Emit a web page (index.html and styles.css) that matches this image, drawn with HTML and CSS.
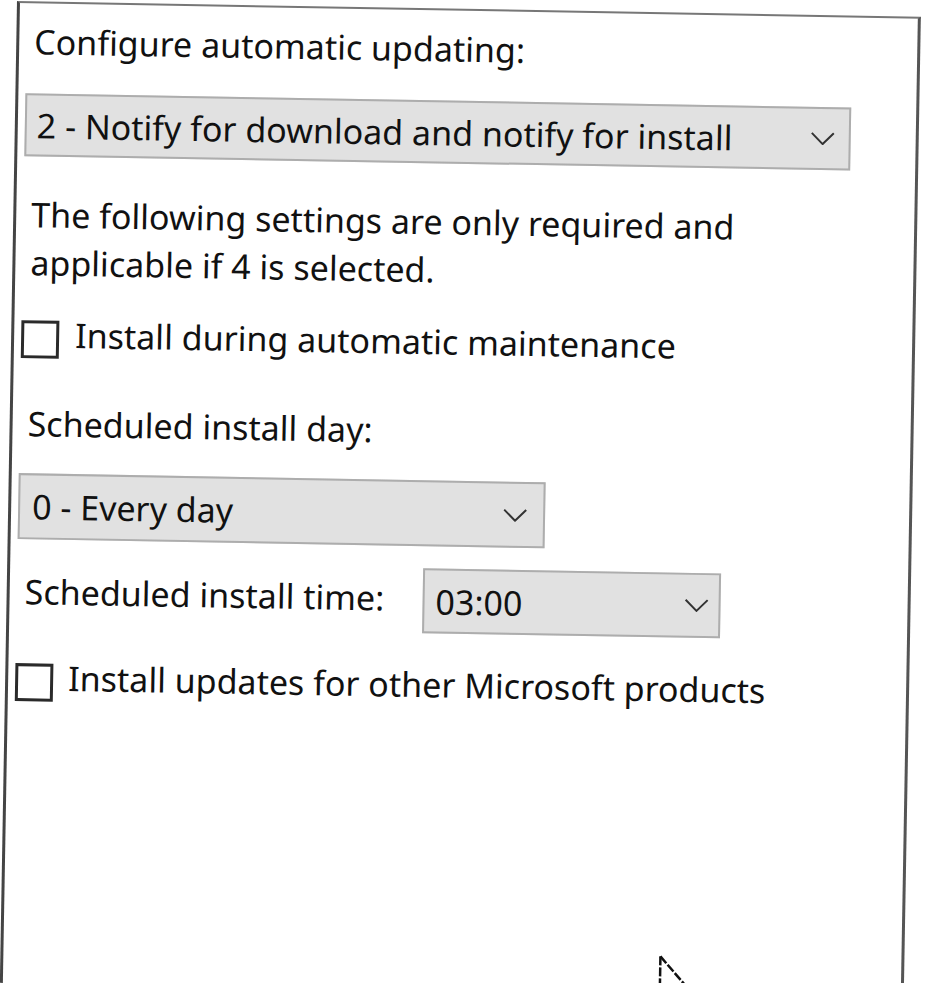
FILE: index.html
```html
<!DOCTYPE html>
<html>
<head>
  <title>Configure Automatic Updates</title>
  <link rel="stylesheet" href="styles.css">
</head>
<body>
  <div class="panel">
    <div class="field-label first">Configure automatic updating:</div>

    <div class="combo combo-wide">
      <span class="combo-text">2 - Notify for download and notify for install</span>
      <svg class="chevron" viewBox="0 0 24 13"><polyline points="1,1 12,12 23,1" /></svg>
    </div>

    <p class="note">The following settings are only required and<br>applicable if 4 is selected.</p>

    <label class="check check-maint">
      <span class="box"></span>
      <span class="check-text">Install during automatic maintenance</span>
    </label>

    <div class="field-label day-label">Scheduled install day:</div>

    <div class="combo combo-day">
      <span class="combo-text">0 - Every day</span>
      <svg class="chevron" viewBox="0 0 24 13"><polyline points="1,1 12,12 23,1" /></svg>
    </div>

    <div class="time-row">
      <span class="time-label">Scheduled install time:</span>
      <div class="combo combo-time">
        <span class="combo-text">03:00</span>
        <svg class="chevron" viewBox="0 0 24 13"><polyline points="1,1 12,12 23,1" /></svg>
      </div>
    </div>

    <label class="check check-other">
      <span class="box"></span>
      <span class="check-text">Install updates for other Microsoft products</span>
    </label>

    <!-- mouse pointer, cut off by the bottom of the capture -->
    <svg class="pointer" viewBox="0 0 40 40">
      <polyline points="2,2 2,38" />
      <polyline points="2,2 34,38" />
    </svg>
  </div>
</body>
</html>
```

FILE: styles.css
```css
body {
  margin: 0;
  background-color: #fff;
  font-family: "Noto Sans", "Open Sans", sans-serif;
  color: #111;
  overflow: hidden;
}

.panel {
  position: relative;
  box-sizing: border-box;
  width: 904px;
  height: 982px;
  margin: 1px 0 0 17px;
  padding: 14px 0 0 7px;
  border-left: 3px solid #444;
  border-right: 3px solid #555;
  border-top: 2px solid #777;
  background-color: #fff;
  transform: rotate(1deg);
  transform-origin: 0 0;
  overflow: hidden;
  font-size: 34px;
  line-height: 48px;
}

.field-label {
  margin-left: 8px;
}

.combo {
  box-sizing: border-box;
  display: flex;
  align-items: center;
  justify-content: space-between;
  padding: 0 14px 0 10px;
  background-color: #e1e1e1;
  border: 2px solid #adadad;
}

.combo-text {
  white-space: nowrap;
}

.chevron {
  width: 24px;
  height: 13px;
  flex-shrink: 0;
}

.chevron polyline {
  fill: none;
  stroke: #333;
  stroke-width: 2;
}

.combo-wide {
  width: 826px;
  height: 63px;
  margin-top: 28px;
}

.note {
  margin: 34px 0 0 8px;
}

.check {
  display: flex;
  align-items: flex-start;
}

.box {
  box-sizing: border-box;
  width: 38px;
  height: 38px;
  margin-top: 10px;
  margin-right: 16px;
  border: 3px solid #2a2a2a;
  background-color: #fff;
  flex-shrink: 0;
}

.check-maint {
  margin-top: 24px;
}

.day-label {
  margin-top: 41px;
}

.combo-day {
  width: 527px;
  height: 66px;
  margin-top: 26px;
  padding-left: 12px;
  padding-right: 16px;
}

.time-row {
  display: flex;
  align-items: flex-start;
  margin-top: 22px;
}

.time-label {
  width: 398px;
  margin-left: 8px;
  margin-top: 6px;
}

.combo-time {
  width: 298px;
  height: 65px;
  padding-left: 11px;
  padding-right: 10px;
}

.check-other {
  margin-top: 27px;
}

.check-other .box {
  margin-right: 15px;
}

.pointer {
  position: absolute;
  left: 655px;
  top: 940px;
  width: 40px;
  height: 40px;
}

.pointer polyline {
  fill: none;
  stroke: #111;
  stroke-width: 2.5;
  stroke-dasharray: 9 2;
}
```
